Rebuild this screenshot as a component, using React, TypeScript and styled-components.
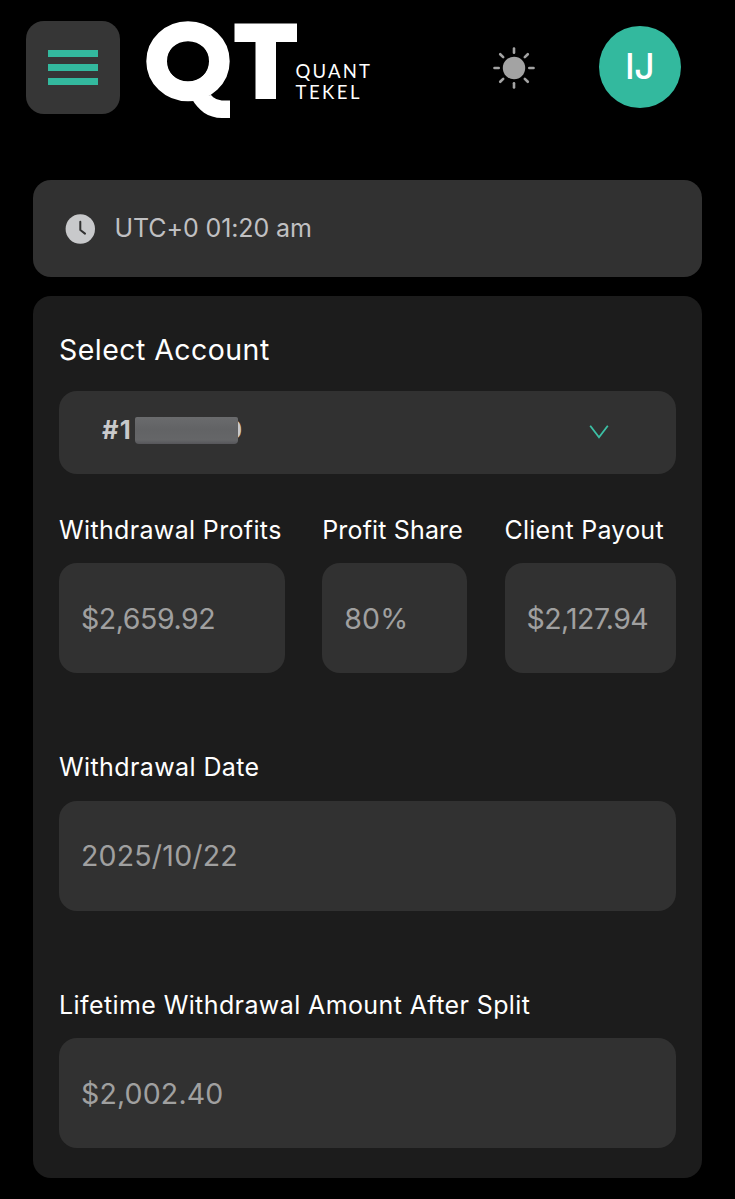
import React from "react";
import styled, { createGlobalStyle } from "styled-components";

const GlobalStyle = createGlobalStyle`
  *, *::before, *::after { box-sizing: border-box; }
  body {
    margin: 0;
    background: #000;
    color: #fff;
    font-family: Inter, "Liberation Sans", sans-serif;
    font-kerning: normal;
  }
`;

const Page = styled.div`
  width: 735px;
  height: 1199px;
  overflow: hidden;
  padding: 0 33px;
  background: #000;
`;

const Header = styled.header`
  display: flex;
  align-items: flex-start;
  height: 180px;
  margin-left: -7px;
  padding-top: 21px;
`;

const MenuButton = styled.button`
  display: flex;
  flex-direction: column;
  align-items: center;
  justify-content: center;
  gap: 6.5px;
  width: 93.5px;
  height: 93px;
  padding: 0;
  border: 0;
  border-radius: 18px;
  background: #363636;
`;

const MenuBar = styled.span`
  width: 50px;
  height: 7.5px;
  background: #33b99e;
`;

const Logo = styled.div`
  display: flex;
  margin-left: 26.5px;
`;

const LogoMark = styled.svg`
  display: block;
  flex: none;
`;

const LogoWords = styled.div`
  padding-top: 40px;
  margin-left: -1.5px;
  font-family: Lato, sans-serif;
  font-size: 18.5px;
  line-height: 21px;
`;

const LogoWord = styled.div<{ $tracking: number }>`
  letter-spacing: ${(p) => p.$tracking}px;
  white-space: nowrap;
`;

const HeaderActions = styled.div`
  display: flex;
  align-items: center;
  gap: 63.5px;
  margin: 5px 21.5px 0 auto;
`;

const Avatar = styled.div`
  display: flex;
  align-items: center;
  justify-content: center;
  width: 82px;
  height: 82px;
  border-radius: 50%;
  background: #33b99e;
  font-size: 35.5px;
  font-weight: 500;
  letter-spacing: -0.5px;
  line-height: 40px;
  padding-bottom: 1px;
`;

const ClockPanel = styled.section`
  display: flex;
  align-items: center;
  gap: 19.5px;
  height: 97px;
  padding-left: 32px;
  border-radius: 18px;
  background: #313131;
`;

const Text = styled.span<{ $size: number; $tracking?: number; $color?: string; $weight?: number }>`
  display: block;
  font-size: ${(p) => p.$size}px;
  font-weight: ${(p) => p.$weight ?? 400};
  letter-spacing: ${(p) => p.$tracking ?? 0}px;
  color: ${(p) => p.$color ?? "#fff"};
  line-height: 36px;
  white-space: nowrap;
`;

const ClockText = styled(Text)`
  margin-bottom: 2px;
`;

const Card = styled.main`
  margin-top: 19px;
  height: 882px;
  padding: 36px 26px 0;
  border-radius: 18px;
  background: #1c1c1c;
`;

const AccountSelect = styled.div`
  display: flex;
  align-items: center;
  justify-content: space-between;
  height: 82.5px;
  margin-top: 23px;
  padding: 0 67.5px 0 43px;
  border-radius: 18px;
  background: #313131;
`;

const AccountNumber = styled.div`
  display: flex;
  align-items: center;
  position: relative;
  width: 140px;
  margin-top: -5px;
`;

const Redaction = styled.span`
  position: absolute;
  left: 33px;
  top: 5px;
  width: 103px;
  height: 27px;
  border-radius: 2px 2px 4px 4px;
  background: linear-gradient(#6a6b6d 0%, #626365 45%, #656668 85%, #56565a 100%);
`;

const LastDigit = styled.span`
  margin-left: auto;
`;

const Columns = styled.div`
  display: grid;
  grid-template-columns: 226px 145px 171.5px;
  column-gap: 37.25px;
  margin-top: 38.5px;
`;

const Field = styled.div<{ $top?: number }>`
  margin-top: ${(p) => p.$top ?? 0}px;
`;

const ValueBox = styled.div`
  display: flex;
  align-items: center;
  height: 110px;
  margin-top: 15.4px;
  padding: 1px 0 0 22px;
  border-radius: 18px;
  background: #313131;
`;

type FieldProps = {
  label: string;
  value: string;
  labelTracking: number;
  valueTracking: number;
  top?: number;
};

const ReadOnlyField = ({ label, value, labelTracking, valueTracking, top }: FieldProps) => (
  <Field $top={top}>
    <Text $size={25} $tracking={labelTracking}>{label}</Text>
    <ValueBox>
      <Text $size={28.5} $tracking={valueTracking} $color="#a0a0a0">{value}</Text>
    </ValueBox>
  </Field>
);

const SunIcon = () => (
  <svg width="42" height="44" viewBox="0 -1 42 44">
    <circle cx="21" cy="22" r="11.2" fill="#a3a3a3" />
    <g stroke="#a3a3a3" strokeWidth="2.6" strokeLinecap="round">
      {[0, 45, 90, 135, 180, 225, 270, 315].map((a) => (
        <line key={a} x1="21" y1="2.5" x2="21" y2="6.7" transform={`rotate(${a} 21 22)`} />
      ))}
    </g>
  </svg>
);

const ClockIcon = () => (
  <svg width="30" height="30" viewBox="0 0 30 30">
    <circle cx="15.300" cy="15" r="14.7" fill="#c8c9cb" />
    <path d="M15.300 7.800v8.200l4.700 3.600" fill="none" stroke="#313131" strokeWidth="2" strokeLinecap="round" strokeLinejoin="round" />
  </svg>
);

export default function App() {
  return (
    <Page>
      <GlobalStyle />
      <Header>
        <MenuButton aria-label="Menu">
          <MenuBar />
          <MenuBar />
          <MenuBar />
        </MenuButton>
        <Logo>
          <LogoMark width="151" height="98" viewBox="0 0 151 98" fill="#fff">
            <ellipse cx="42" cy="40.2" rx="31.7" ry="30" fill="none" stroke="#fff" strokeWidth="20" />
            <circle cx="42" cy="40.2" r="27" fill="none" stroke="#fff" strokeWidth="12" />
            <path d="M46 78C52 89 62 97 76 97H84V79.5H78C72 79.5 67.500 77 65 74Z" />
            <rect x="88.500" y="2.500" width="62.500" height="18.500" />
            <rect x="109.500" y="20" width="20.500" height="58" />
          </LogoMark>
          <LogoWords>
            <LogoWord $tracking={2.2}>QUANT</LogoWord>
            <LogoWord $tracking={2.5}>TEKEL</LogoWord>
          </LogoWords>
        </Logo>
        <HeaderActions>
          <SunIcon />
          <Avatar>IJ</Avatar>
        </HeaderActions>
      </Header>

      <ClockPanel>
        <ClockIcon />
        <ClockText $size={25} $tracking={-0.1} $color="#c0c0c2">UTC+0 01:20 am</ClockText>
      </ClockPanel>

      <Card>
        <Text $size={28.5} $tracking={0.45}>Select Account</Text>
        <AccountSelect>
          <AccountNumber>
            <Text $size={25.5} $weight={700} $tracking={1.2} $color="#c9c9cb">#1</Text>
            <LastDigit>
              <Text $size={25} $weight={700} $color="#c9c9cb">0</Text>
            </LastDigit>
            <Redaction />
          </AccountNumber>
          <svg width="20" height="14" viewBox="0 0 20 14" fill="none" stroke="#3cc0a5" strokeWidth="1.8">
            <path d="M1.200 0.800 10 12.300 18.800 0.800" />
          </svg>
        </AccountSelect>

        <Columns>
          <ReadOnlyField label="Withdrawal Profits" value="$2,659.92" labelTracking={0.35} valueTracking={-0.45} />
          <ReadOnlyField label="Profit Share" value="80%" labelTracking={0.15} valueTracking={0.2} />
          <ReadOnlyField label="Client Payout" value="$2,127.94" labelTracking={0.25} valueTracking={-0.6} />
        </Columns>
        <ReadOnlyField label="Withdrawal Date" value="2025/10/22" labelTracking={0.4} valueTracking={0.2} top={76} />
        <ReadOnlyField label="Lifetime Withdrawal Amount After Split" value="$2,002.40" labelTracking={0.4} valueTracking={0.15} top={76} />
      </Card>
    </Page>
  );
}
